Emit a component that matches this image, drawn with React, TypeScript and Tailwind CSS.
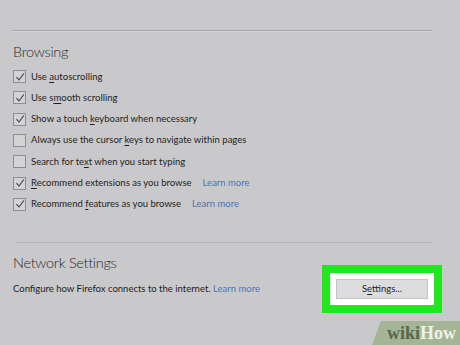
import React from "react";

type Row = { label: React.ReactNode; checked: boolean; learn?: boolean };

// underline the access key letter, like the Firefox prefs page does
const K = ({ children }: { children: React.ReactNode }) => <span className="underline underline-offset-2">{children}</span>;

const rows: Row[] = [
    { label: <>Use <K>a</K>utoscrolling</>, checked: true },
    { label: <>Use s<K>m</K>ooth scrolling</>, checked: true },
    { label: <>Show a touch <K>k</K>eyboard when necessary</>, checked: true },
    { label: <>Always use the cursor <K>k</K>eys to navigate within pages</>, checked: false },
    { label: <>Search for te<K>x</K>t when you start typing</>, checked: false },
    { label: <><K>R</K>ecommend extensions as you browse</>, checked: true, learn: true },
    { label: <>Recommend <K>f</K>eatures as you browse</>, checked: true, learn: true },
];

function Checkbox({ checked }: { checked: boolean }) {
    return (
        <div className="w-[13px] h-[13px] shrink-0 border border-[#8e8e92] bg-[#d3d3d6] flex items-center justify-center">
            {checked && (
                <svg width="10" height="10" viewBox="0 0 10 10">
                    <path d="M1.5 5.2 L4 8 L8.8 1.5" fill="none" stroke="#3c3c40" strokeWidth="1.1" />
                </svg>
            )}
        </div>
    );
}

export default function App() {
    return (
        <div
            className="relative w-[460px] h-[345px] overflow-hidden bg-[#c9c9cb] text-[#1e1e20]"
            style={{ fontFamily: 'Lato, "Open Sans", Arial, sans-serif' }}
        >
            <div className="pt-[30px]">
                <div className="ml-[12px] w-[420px] h-[2px] bg-[#a9a9ac] border-b border-[#d2d2d4]" />
            </div>

            <div className="px-[13px]">
                <h2 className="mt-[10px] text-[14.5px] tracking-[-0.3px] leading-[20px] font-light text-[#2a2a2c]">Browsing</h2>
                <div className="mt-[4px] flex flex-col">
                    {rows.map((r, i) => (
                        <div key={i} className="h-[21.3px] flex items-center gap-[5px] text-[9.5px]">
                            <Checkbox checked={r.checked} />
                            <span>{r.label}</span>
                            {r.learn && <span className="ml-[6px] text-[#4a76b4]">Learn more</span>}
                        </div>
                    ))}
                </div>
            </div>

            <div className="mt-[27px] ml-[16px] w-[416px] h-[1px] bg-[#b4b4b7]" />

            <div className="px-[13px]">
                <h2 className="mt-[10px] text-[14.5px] tracking-[-0.3px] leading-[20px] font-light text-[#2a2a2c]">Network Settings</h2>
                <div className="flex items-center justify-between -mt-[8px]">
                    <p className="text-[9.5px]">
                        Configure how Firefox connects to the internet. <span className="text-[#4a76b4]">Learn more</span>
                    </p>
                    <div className="mr-[5px] border-[8px] border-[#22e61f] bg-white px-[6px] py-[6px]">
                        <button className="block w-[92px] h-[20px] bg-[#dcdcde] border border-[#c4c4c6] text-[9.5px] text-[#1e1e20]">
                            S<K>e</K>ttings...
                        </button>
                    </div>
                </div>
            </div>

            {/* wikiHow watermark */}
            <div
                className="absolute right-0 bottom-0 w-[88px] h-[24px] bg-[#a4b596] flex items-center justify-end pr-[4px]"
                style={{ clipPath: "polygon(10% 0%, 100% 0%, 100% 100%, 0% 100%)" }}
            >
                <span className="text-[18px] font-bold leading-none" style={{ fontFamily: '"Liberation Serif", serif' }}>
                    <span className="text-[#56664d]">wiki</span>
                    <span className="text-[#eef2ea]">How</span>
                </span>
            </div>
        </div>
    );
}
